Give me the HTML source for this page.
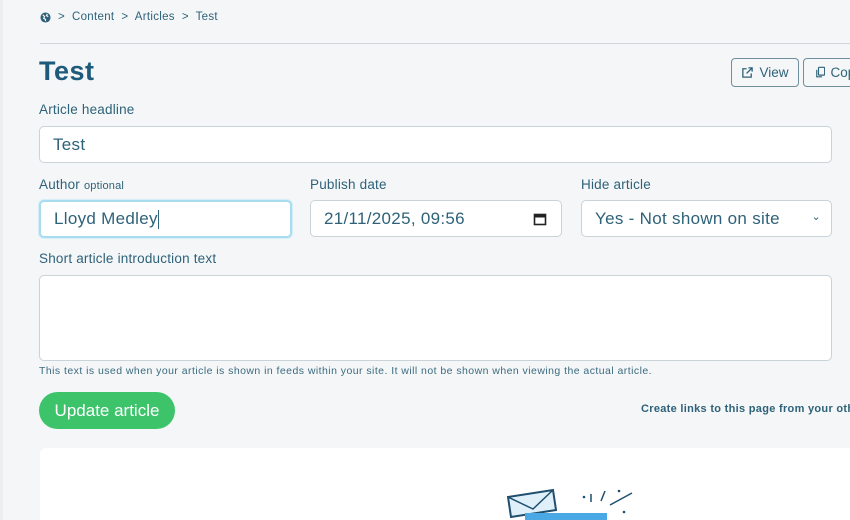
<!DOCTYPE html>
<html><head><style>
body{margin:0;width:850px;height:520px;overflow:hidden;background:#f4f6f7;font-family:"Liberation Sans",sans-serif;color:#2e6279;position:relative}
.a{position:absolute}
.lbl{font-size:13.5px;color:#2e6279;letter-spacing:0.2px}
.in{position:absolute;background:#fff;border:1px solid #c9d3d8;border-radius:5px;box-sizing:border-box;font-size:17px;color:#2e6279;padding-left:13px;display:flex;align-items:center;letter-spacing:0.3px}
</style></head><body>
<div class="a" style="left:0;top:0;width:3px;height:520px;background:#eceeef"></div>
<svg class="a" style="left:40px;top:12px" width="11" height="11" viewBox="0 0 12 12"><circle cx="6" cy="6" r="5.5" fill="#2e6279"/><path d="M3 3l2 2-1 2 2 1 0 2M8 2l-1 2 2 1" stroke="#fff" stroke-width="1.2" fill="none"/></svg>
<div class="a" style="left:58px;top:11px;font-size:11.5px;color:#2e6279;letter-spacing:0.3px">&gt;&nbsp; Content &nbsp;&gt;&nbsp; Articles &nbsp;&gt;&nbsp; Test</div>
<div class="a" style="left:40px;top:43px;width:810px;height:1px;background:#cfd6da"></div>
<div class="a" style="left:39px;top:56px;font-size:27px;font-weight:bold;color:#1e5a7a;letter-spacing:0.5px">Test</div>
<div class="a" style="left:731px;top:58px;width:68px;height:29px;border:1px solid #6f8f9e;border-radius:4px;box-sizing:border-box;font-size:13.5px;display:flex;align-items:center;justify-content:center;gap:5px"><svg width="13" height="13" viewBox="0 0 14 14" fill="none" stroke="#2e6279" stroke-width="1.4"><path d="M6 3H2v9h9V8M8 2h4v4M12 2L6 8"/></svg>View</div>
<div class="a" style="left:803px;top:58px;width:60px;height:29px;border:1px solid #6f8f9e;border-radius:4px;box-sizing:border-box;font-size:13.5px;display:flex;align-items:center;padding-left:11px;gap:5px"><svg width="12" height="13" viewBox="0 0 12 14" fill="none" stroke="#2e6279" stroke-width="1.3"><rect x="4" y="1" width="7" height="9" rx="1"/><path d="M2 4v8h6"/></svg>Copy</div>
<div class="a lbl" style="left:39px;top:102px">Article headline</div>
<div class="in" style="left:39px;top:126px;width:793px;height:37px">Test</div>
<div class="a lbl" style="left:39px;top:177px">Author <span style="font-size:11px">optional</span></div>
<div class="in" style="left:39px;top:200px;width:253px;height:38px;border:2px solid #a9dcf1;box-shadow:0 0 0 1px #d6eef8">Lloyd Medley<span style="display:inline-block;width:1px;height:19px;background:#2e6279"></span></div>
<div class="a lbl" style="left:310px;top:177px">Publish date</div>
<div class="in" style="left:310px;top:200px;width:252px;height:37px">21/11/2025, 09:56
<svg class="a" style="left:222px;top:11px" width="14" height="14" viewBox="0 0 14 14"><rect x="1.5" y="2.5" width="11" height="10" fill="none" stroke="#222" stroke-width="1.6"/><rect x="1.5" y="2.5" width="11" height="3" fill="#222"/></svg></div>
<div class="a lbl" style="left:581px;top:177px">Hide article</div>
<div class="in" style="left:581px;top:200px;width:251px;height:37px">Yes - Not shown on site<span class="a" style="right:10px;top:9px;font-size:11px">&#8964;</span></div>
<div class="a lbl" style="left:39px;top:251px">Short article introduction text</div>
<div class="in" style="left:39px;top:275px;width:793px;height:86px"></div>
<div class="a" style="left:39px;top:365px;font-size:10.5px;color:#3d6b80;letter-spacing:0.45px;white-space:nowrap">This text is used when your article is shown in feeds within your site. It will not be shown when viewing the actual article.</div>
<div class="a" style="left:39px;top:392px;width:136px;height:37px;border-radius:19px;background:#3dc46b;color:#fff;font-size:17px;display:flex;align-items:center;justify-content:center">Update article</div>
<div class="a" style="left:641px;top:403px;font-size:11px;font-weight:bold;white-space:nowrap;color:#2e6279;letter-spacing:0.3px">Create links to this page from your other pages</div>
<div class="a" style="left:40px;top:448px;width:810px;height:72px;background:#fff;border-radius:6px 0 0 0"></div>
<svg class="a" style="left:500px;top:485px" width="140" height="35" viewBox="0 0 140 35"><path d="M8 12l45-7 3 20-45 7z" fill="#dff0fb" stroke="#1e4f6e" stroke-width="2"/><path d="M8 12l25 12 20-19" fill="none" stroke="#1e4f6e" stroke-width="1.5"/><rect x="25" y="28" width="82" height="10" fill="#4aa8e4"/><path d="M91 17v-8M101 16l4-10M110 20l22-12" stroke="#1e4f6e" stroke-width="1.5"/><circle cx="84" cy="12" r="1.3" fill="#1e4f6e"/><circle cx="119" cy="6" r="1.3" fill="#1e4f6e"/><circle cx="124" cy="27" r="1.3" fill="#1e4f6e"/></svg>
</body></html>
